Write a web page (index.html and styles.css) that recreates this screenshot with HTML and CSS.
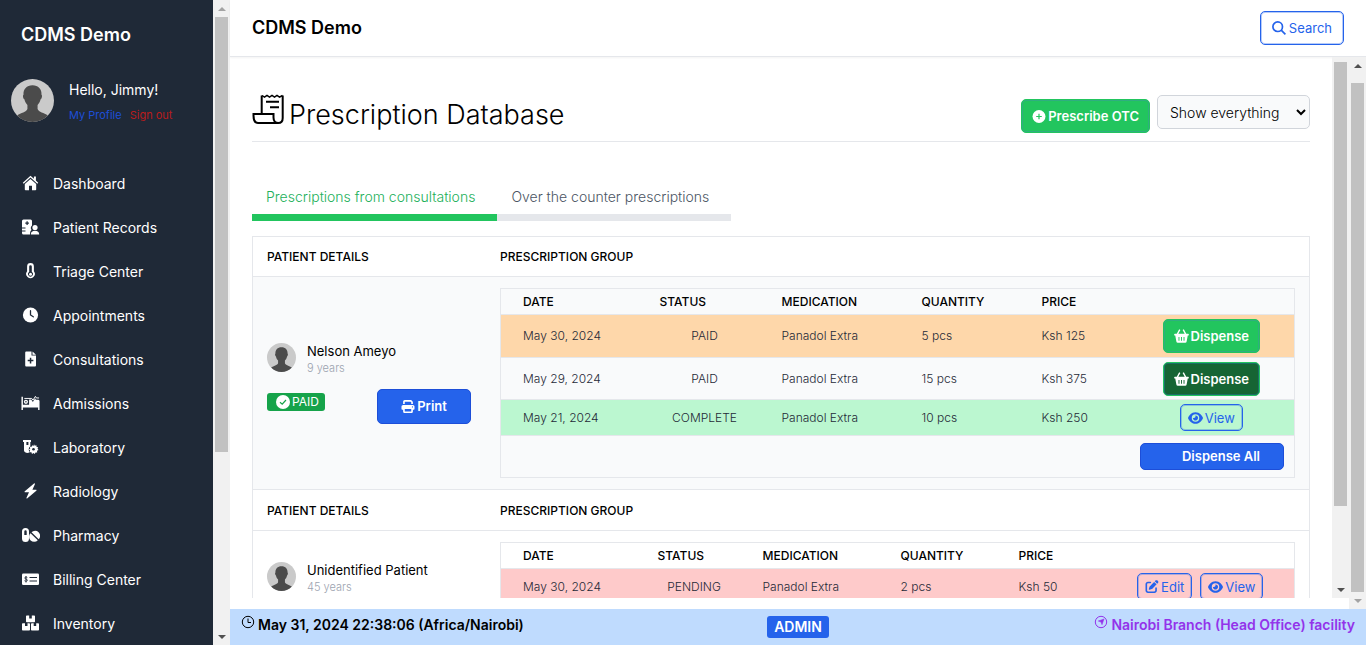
FILE: index.html
```html
<!DOCTYPE html>
<html lang="en">
<head>
<meta charset="utf-8">
<title>CDMS Demo - Prescription Database</title>
<link rel="stylesheet" href="styles.css">
</head>
<body>
<svg class="sprite" aria-hidden="true">
  <symbol id="avatar" viewBox="0 0 44 44">
    <circle cx="22" cy="22" r="22" fill="#cacaca"/>
    <path d="M22 6.500c-6 0-9.500 4-9.200 9.500-.9.400-.7 3.600.9 4.800.6 2.700 1.700 4.300 3.100 5.700v4.300c-1 3.200-6.800 3.900-10.500 6.500A22 22 0 0 0 22 44a22 22 0 0 0 15.700-6.700c-3.700-2.600-9.500-3.300-10.500-6.500v-4.300c1.400-1.400 2.500-3 3.100-5.700 1.600-1.200 1.800-4.400.9-4.800C31.500 10.500 28 6.500 22 6.500z" fill="#4b4b4b"/>
  </symbol>
  <symbol id="eye" viewBox="0 0 576 512"><path d="M288 32c-80.800 0-145.500 36.800-192.600 80.600C48.600 156 17.300 208 2.500 243.700c-3.300 7.900-3.300 16.700 0 24.600C17.300 304 48.600 356 95.400 399.400C142.500 443.200 207.200 480 288 480s145.500-36.800 192.600-80.600c46.800-43.500 78.100-95.400 93-131.100c3.300-7.900 3.300-16.700 0-24.600c-14.900-35.700-46.200-87.700-93-131.100C433.500 68.800 368.800 32 288 32zM144 256a144 144 0 1 1 288 0 144 144 0 1 1-288 0zm144-64c0 35.300-28.700 64-64 64c-7.100 0-13.900-1.200-20.300-3.300c-5.500-1.800-11.900 1.600-11.700 7.400c.3 6.900 1.300 13.800 3.200 20.700c13.700 51.200 66.400 81.600 117.600 67.900s81.600-66.400 67.900-117.600c-11.100-41.500-47.800-69.400-88.600-71.100c-5.800-.2-9.200 6.100-7.400 11.700c2.100 6.400 3.300 13.200 3.300 20.300z"/></symbol>
  <symbol id="edit" viewBox="0 0 512 512"><path d="M471.600 21.700c-21.900-21.900-57.300-21.900-79.200 0L362.300 51.700l97.900 97.900 30.100-30.100c21.900-21.900 21.900-57.300 0-79.200L471.600 21.700zm-299.200 220c-6.100 6.100-10.800 13.600-13.500 21.900l-29.600 88.800c-2.900 8.600-.6 18.100 5.800 24.600s15.900 8.700 24.600 5.800l88.800-29.600c8.200-2.700 15.700-7.400 21.900-13.500L437.700 172.300 339.700 74.300 172.400 241.700zM96 64C43 64 0 107 0 160V416c0 53 43 96 96 96H352c53 0 96-43 96-96V320c0-17.700-14.300-32-32-32s-32 14.300-32 32v96c0 17.700-14.300 32-32 32H96c-17.700 0-32-14.300-32-32V160c0-17.700 14.300-32 32-32h96c17.700 0 32-14.300 32-32s-14.300-32-32-32H96z"/></symbol>
  <symbol id="print" viewBox="0 0 512 512"><path d="M128 0C92.700 0 64 28.700 64 64v96h64V64H354.700L384 93.300V160h64V93.300c0-17-6.700-33.300-18.700-45.300L400 18.700C388 6.700 371.700 0 354.700 0H128zM384 352v96H128V352H384zm64 32h32c17.700 0 32-14.300 32-32V256c0-35.300-28.700-64-64-64H64c-35.300 0-64 28.700-64 64v96c0 17.700 14.300 32 32 32H64v64c0 35.300 28.700 64 64 64H384c35.300 0 64-28.700 64-64V384zM432 248a24 24 0 1 1 0 48 24 24 0 1 1 0-48z"/></symbol>
  <symbol id="basket" viewBox="0 0 16 15"><path fill-rule="evenodd" d="M5.500.3 6.800 1 4.600 5.200h6.800L9.200 1 10.500.3 13.100 5.200H15a.8.8 0 0 1 0 1.800h-.3l-1.200 6.300a1.600 1.600 0 0 1-1.600 1.400H4.100a1.600 1.600 0 0 1-1.600-1.400L1.300 7H1a.8.8 0 0 1 0-1.800h1.900zM4.800 8.500v4h1v-4zm2.700 0v4h1v-4zm2.700 0v4h1v-4z"/></symbol>
</svg>

<div class="app">
  <aside class="sidebar">
    <div class="brand">CDMS Demo</div>
    <div class="user">
      <svg class="user-pic" aria-hidden="true"><use href="#avatar"/></svg>
      <div>
        <div class="hello">Hello, Jimmy!</div>
        <div class="user-links"><a class="profile" href="#">My Profile</a><a class="signout" href="#">Sign out</a></div>
      </div>
    </div>
    <nav class="menu">
      <a href="#"><svg viewBox="0 0 16 16"><path d="M8 .8.3 7.700l.9 1L8 2.600l6.800 6.100.9-1-2.300-2.100V1.500h-2v2.300z"/><path d="M8 4 2.300 9v5.400c0 .5.300.8.800.8h3.400v-4.500h3v4.500h3.400c.5 0 .8-.3.800-.8V9z"/></svg>Dashboard</a>
      <a href="#"><svg viewBox="0 0 18 16"><path fill-rule="evenodd" d="M2 .5h7A1.500 1.500 0 0 1 10.500 2v4.500A3.500 3.500 0 0 0 10 11c-1 .8-1.500 2-1.500 4.500H2A1.500 1.500 0 0 1 .5 14v-1.500H4v-1H.5v-2H4v-1H.5V2A1.500 1.500 0 0 1 2 .5zm3 1.800v1.200H3.800v1.200H5v1.200h1.200V4.700h1.200V3.500H6.200V2.300z"/><circle cx="13.500" cy="8.500" r="2.600"/><path d="M9.300 15.500c0-2.600 1.600-3.700 4.200-3.700s4.200 1.100 4.200 3.700z"/></svg>Patient Records</a>
      <a href="#"><svg viewBox="0 0 16 16"><path d="M4.600 3.500a3.400 3.400 0 0 1 6.800 0v4.700a4.300 4.300 0 1 1-6.800 0z"/><path d="M6.700 3.500a1.300 1.300 0 0 1 2.600 0v5.600a2.400 2.400 0 1 1-2.600 0z" fill="#1f2937"/><circle cx="8" cy="11.200" r="1.500"/></svg>Triage Center</a>
      <a href="#"><svg viewBox="0 0 16 16"><circle cx="8" cy="8" r="7.600"/><path d="M8 3.700V8l2.800 1.800" fill="none" stroke="#1f2937" stroke-width="1.300" stroke-linecap="round"/></svg>Appointments</a>
      <a href="#"><svg viewBox="0 0 16 16"><path fill-rule="evenodd" d="M4 .5h5v4h4.500v9.700c0 .8-.5 1.300-1.300 1.300H4c-.8 0-1.300-.5-1.300-1.300V1.800C2.700 1 3.200.5 4 .5zM7.300 6.800v2H5.200v1.500h2.100v2.100h1.500v-2.100h2.100V8.800H8.800v-2z"/><path d="M10 .5 13.500 3.700H10z"/></svg>Consultations</a>
      <a href="#"><svg viewBox="0 0 20 16"><path d="M.5 1.500H2v8.300h6.500V4.200h2.200L12.500 7l2.300-4 .9 1.700h2.300A1.500 1.500 0 0 1 19.500 6v9.300H18v-2.500H2v2.500H.5z"/><circle cx="5.200" cy="6.800" r="2.200"/><circle cx="5.200" cy="6.800" r=".8" fill="#1f2937"/><path d="M3.500 3.200h7.800l1.300 1.800 2.600-4 1 1.700H19" fill="none" stroke="#fff"/></svg>Admissions</a>
      <a href="#"><svg viewBox="0 0 16 16"><path fill-rule="evenodd" d="M.5 1h8v2H7.800v4.200A4.400 4.400 0 0 0 7.200 13c-1 1.600-5.700 1-5.700-1.500V3H.5zM3.900 3v3h2V3z"/><path d="m11.500 5.300.8 1.500 1.600-.6.200 1.700 1.600.3-.7 1.500 1 1.300-1.500.8.200 1.700-1.700.1-.7 1.500-1.300-1-1.500.8-.6-1.600-1.700-.1.400-1.600-1.200-1.200 1.300-1-.3-1.700 1.700 0 .7-1.500 1.200.9z"/><circle cx="11" cy="10.300" r="1.300" fill="#1f2937"/></svg>Laboratory</a>
      <a href="#"><svg viewBox="0 0 16 16"><path d="M11.500.5 2.300 8.300c-.5.500-.2 1 .4 1h3.800L4 14.700c-.3.700.4 1 .9.600L13.800 7.700c.5-.5.200-1-.4-1H9.900L12.400 1.200c.2-.7-.4-1.100-.9-.7z"/></svg>Radiology</a>
      <a href="#"><svg viewBox="0 0 18 16"><path fill-rule="evenodd" d="M.5 4.500a3.500 3.500 0 0 1 7 0v7a3.500 3.500 0 0 1-7 0zm2.300 0V8h2.400V4.500a1.200 1.200 0 0 0-2.400 0z"/><path d="M9 6.300 16.300 13.300A4.700 4.700 0 0 1 9 6.300zM10 5.300A4.700 4.700 0 0 1 17.200 12.300z"/></svg>Pharmacy</a>
      <a href="#"><svg viewBox="0 0 18 16"><rect x=".5" y="2.500" width="17" height="11.500" rx="1.300"/><path d="M8 6.500h7.500M8 10h7.500" stroke="#1f2937"/><path d="M5.800 6.500c-.8-.7-2.600-.5-2.600.5 0 1.300 2.700.8 2.700 2.200 0 1.200-2 1.300-2.900.5M4.500 5v6.500" fill="none" stroke="#1f2937" stroke-width=".9"/></svg>Billing Center</a>
      <a href="#"><svg viewBox="0 0 18 16"><path d="M5.300.5h2.400v3h2.600v-3h2.400c.5 0 .8.300.8.800v5.200c0 .5-.3.800-.8.800H5.300c-.5 0-.8-.3-.8-.8V1.300c0-.5.300-.8.800-.8zM1.300 8.300h2.200v2.600H6V8.300h1.700c.5 0 .8.300.8.800v5.600c0 .5-.3.800-.8.800H1.300c-.5 0-.8-.3-.8-.8V9.100c0-.5.300-.8.800-.8zM10.300 8.300h1.900v2.600h2.500V8.300h2c.5 0 .8.300.8.800v5.600c0 .5-.3.800-.8.800h-6.400c-.5 0-.8-.3-.8-.8V9.100c0-.5.300-.8.800-.8z"/></svg>Inventory</a>
    </nav>
  </aside>
  <div class="scrollbar side-bar" aria-hidden="true"><i class="arrow up faint"></i><i class="thumb"></i><i class="rest"></i><i class="arrow down"></i></div>

  <div class="page">
    <header class="topbar">
      <span class="topbar-title">CDMS Demo</span>
      <button class="btn outline search" type="button"><svg viewBox="0 0 14 14" fill="none" stroke="currentColor" stroke-width="1.700"><circle cx="5.700" cy="5.700" r="4.800"/><path d="m9.200 9.200 4.200 4.200"/></svg>Search</button>
    </header>

    <div class="viewport">
      <div class="inner">
        <main class="content">
          <div class="heading">
            <h1><svg viewBox="0 0 32 30" fill="none" stroke="currentColor" stroke-width="2"><path d="M9.200 19V1.500M30.200 1.500V24c0 3-1.500 5-4.500 5H5.500C2.500 29 1 26 1 21.500V20h20v3.500c0 3 1.500 5.500 5 5.500"/><path d="M9.500 1.500 12 3.200l2.500-1.700L17 3.200l2.500-1.700L22 3.200l2.500-1.700L27 3.200l3-1.700" stroke-width="1.500"/><path d="M13.500 7.800h13M17.500 13.200h9"/></svg>Prescription Database</h1>
            <div class="tools">
              <button class="btn green otc" type="button"><svg viewBox="0 0 14 14"><circle cx="7" cy="7" r="7" fill="currentColor"/><path d="M7 4v6M4 7h6" stroke="#22c55e" stroke-width="1.300"/></svg>Prescribe OTC</button>
              <select class="filter" aria-label="Filter prescriptions"><option>Show everything</option></select>
            </div>
          </div>

          <div class="tabs">
            <a class="tab active" href="#">Prescriptions from consultations</a>
            <a class="tab" href="#">Over the counter prescriptions</a>
          </div>

          <table class="groups">
            <colgroup><col class="g-patient"><col></colgroup>
            <tbody>
              <tr class="group-head"><th>PATIENT DETAILS</th><th>PRESCRIPTION GROUP</th></tr>
              <tr class="group shaded">
                <td>
                  <div class="patient"><svg aria-hidden="true"><use href="#avatar"/></svg><div><div class="name">Nelson Ameyo</div><div class="age">9 years</div></div></div>
                  <div class="patient-actions">
                    <span class="paid"><svg viewBox="0 0 14 14"><circle cx="7" cy="7" r="7" fill="currentColor"/><path d="m4 7.200 2.200 2L10 5" fill="none" stroke="#16a34a" stroke-width="1.200"/></svg>PAID</span>
                    <button class="btn blue print" type="button"><svg><use href="#print"/></svg>Print</button>
                  </div>
                </td>
                <td>
                  <table class="items">
                    <colgroup><col class="a1"><col class="a2"><col class="a3"><col class="a4"><col class="a5"><col></colgroup>
                    <thead><tr><th>DATE</th><th>STATUS</th><th>MEDICATION</th><th>QUANTITY</th><th>PRICE</th><th></th></tr></thead>
                    <tbody>
                      <tr class="tall orange"><td>May 30, 2024</td><td class="status">PAID</td><td>Panadol Extra</td><td>5 pcs</td><td>Ksh 125</td><td class="actions"><button class="btn green" type="button"><svg class="bk"><use href="#basket"/></svg>Dispense</button></td></tr>
                      <tr class="tall"><td>May 29, 2024</td><td class="status">PAID</td><td>Panadol Extra</td><td>15 pcs</td><td>Ksh 375</td><td class="actions"><button class="btn green dark" type="button"><svg class="bk"><use href="#basket"/></svg>Dispense</button></td></tr>
                      <tr class="mint"><td>May 21, 2024</td><td class="status">COMPLETE</td><td>Panadol Extra</td><td>10 pcs</td><td>Ksh 250</td><td class="actions"><button class="btn outline small" type="button"><svg class="bk"><use href="#eye"/></svg>View</button></td></tr>
                      <tr class="total"><td colspan="6"><button class="btn blue all" type="button">Dispense All</button></td></tr>
                    </tbody>
                  </table>
                </td>
              </tr>
              <tr class="group-head"><th>PATIENT DETAILS</th><th>PRESCRIPTION GROUP</th></tr>
              <tr class="group">
                <td>
                  <div class="patient"><svg aria-hidden="true"><use href="#avatar"/></svg><div><div class="name">Unidentified Patient</div><div class="age">45 years</div></div></div>
                </td>
                <td>
                  <table class="items">
                    <colgroup><col class="b1"><col class="b2"><col class="b3"><col class="b4"><col class="b5"><col></colgroup>
                    <thead><tr><th>DATE</th><th>STATUS</th><th>MEDICATION</th><th>QUANTITY</th><th>PRICE</th><th></th></tr></thead>
                    <tbody>
                      <tr class="pink"><td>May 30, 2024</td><td class="status">PENDING</td><td>Panadol Extra</td><td>2 pcs</td><td>Ksh 50</td><td class="actions"><button class="btn outline small" type="button"><svg><use href="#edit"/></svg>Edit</button><button class="btn outline small" type="button"><svg class="bk"><use href="#eye"/></svg>View</button></td></tr>
                    </tbody>
                  </table>
                </td>
              </tr>
            </tbody>
          </table>
        </main>
        <div class="scrollbar inner-bar" aria-hidden="true"><i class="thumb"></i><i class="rest"></i><i class="arrow down"></i></div>
      </div>
      <div class="scrollbar outer-bar" aria-hidden="true"><i class="arrow up"></i><i class="thumb"></i><i class="arrow down faint"></i></div>
    </div>

    <footer class="statusbar">
      <span class="clock"><svg viewBox="0 0 14 14" fill="none" stroke="currentColor"><circle cx="7" cy="7" r="5.700"/><path d="M7 3.500V7.500H10"/></svg>May 31, 2024 22:38:06 (Africa/Nairobi)</span>
      <span class="role">ADMIN</span>
      <span class="facility"><svg viewBox="0 0 14 14" fill="none" stroke="currentColor"><circle cx="7" cy="7" r="5.700"/><path d="m10 4-2 5.700-1-2.700-2.700-1z" fill="currentColor" stroke-width=".5"/></svg>Nairobi Branch (Head Office) facility</span>
    </footer>
  </div>
</div>
</body>
</html>
```

FILE: styles.css
```css
* { box-sizing: border-box; }
body {
  margin: 0;
  font-family: Inter, "Open Sans", "Liberation Sans", sans-serif;
  font-size: 14px;
  color: #000;
  background: #fff;
}
a { text-decoration: none; }
button, select { font-family: inherit; }
.sprite { position: absolute; width: 0; height: 0; }

.app {
  display: grid;
  grid-template-columns: 213px 17px minmax(0, 1fr);
  height: 100vh;
  overflow: hidden;
}

/* Sidebar */
.sidebar { background: #1f2937; color: #fff; overflow: hidden; min-height: 0; }
.brand { padding: 22px 21px 0; font-size: 18px; line-height: 25px; font-weight: 600; }
.user { display: flex; gap: 15px; padding: 32px 11px 0; }
.user-pic { width: 43px; height: 43px; }
.hello { font-size: 14px; line-height: 22px; }
.user-links { display: flex; gap: 8px; font-size: 11px; line-height: 28px; }
.profile { color: #1d4ed8; }
.signout { color: #b91c1c; }
.menu { padding-top: 32px; }
.menu a {
  display: flex;
  align-items: center;
  gap: 13px;
  height: 44px;
  padding-left: 21px;
  color: #fff;
  font-size: 14px;
}
.menu svg { width: 19px; height: 16px; fill: #fff; }

/* Scroll tracks */
.scrollbar { display: flex; flex-direction: column; background: #f1f1f1; padding: 0 2px; width: 17px; }
.arrow { height: 17px; display: flex; align-items: center; justify-content: center; flex: none; }
.arrow::before { content: ""; border: 4px solid transparent; }
.arrow.up::before { border-top: 0; border-bottom-color: #505050; }
.arrow.down::before { border-bottom: 0; border-top-color: #505050; }
.arrow.faint.up::before { border-bottom-color: #a3a3a3; }
.arrow.faint.down::before { border-top-color: #a3a3a3; }
.thumb { background: #c1c1c1; flex: 1; }
.side-bar .thumb { flex: 435; }
.side-bar .rest { flex: 176; }
.inner-bar { padding-top: 5px; }
.inner-bar .thumb { flex: 444; }
.inner-bar .rest { flex: 75; }
.outer-bar .thumb { margin-top: 9px; }

/* Page frame */
.page { display: flex; flex-direction: column; min-width: 0; min-height: 0; }
.topbar {
  display: flex;
  align-items: center;
  justify-content: space-between;
  flex: none;
  height: 57px;
  padding: 0 22px;
  border-bottom: 1px solid #e5e7eb;
  box-shadow: 0 1px 2px #0000000d;
}
.topbar-title { font-size: 18px; font-weight: 600; padding-bottom: 2px; }
.viewport { flex: 1; min-height: 0; display: flex; }
.inner { flex: 1; min-width: 0; display: flex; margin-bottom: 11px; }
.content { flex: 1; min-width: 0; overflow: hidden; padding: 0 22px; }

/* Buttons */
.btn {
  display: inline-flex;
  align-items: center;
  justify-content: center;
  gap: 2px;
  height: 34px;
  padding: 0 10px;
  border: 1px solid;
  border-radius: 5px;
  font-size: 13px;
  font-weight: 600;
  line-height: 18px;
  white-space: nowrap;
}
.btn svg { width: 14px; height: 13px; fill: currentColor; }
.btn svg.bk { width: 15px; height: 14px; }
.outline { border-color: #2563eb; background: transparent; color: #2563eb; font-weight: 400; box-shadow: inset 0 0 0 1px #2563eb55; }
.green { background: #22c55e; border-color: #22c55e; color: #fff; box-shadow: inset 0 0 0 1px #2fae80; }
.dark { background: #166534; box-shadow: inset 0 0 0 1px #1b6f6a; }
.blue { background: #2563eb; border-color: #1d4ed8; color: #fff; }
.small { height: 27px; padding: 0 7px; }
.search { gap: 3px; padding: 0 11px; }
.btn.search svg { fill: none; height: 14px; }

/* Heading */
.heading {
  display: flex;
  align-items: flex-start;
  justify-content: space-between;
  height: 85px;
  border-bottom: 1px solid #e5e7eb;
}
h1 { display: flex; gap: 4px; margin: 0; padding-top: 37px; font-size: 27px; line-height: 42px; font-weight: 300; }
h1 svg { width: 33px; height: 30px; }
.tools { display: flex; gap: 7px; padding-top: 38px; align-items: flex-start; }
.otc { margin-top: 4px; }
.filter {
  width: 153px;
  height: 34px;
  padding: 0 8px;
  border: 1px solid #d1d5db;
  border-radius: 5px;
  background: #f9fafb;
  color: #000;
  font-size: 14px;
  font-weight: 300;
}

/* Tabs */
.tabs { display: flex; padding-top: 40px; }
.tab {
  padding: 0 22px 2px 14px;
  font-size: 14px;
  line-height: 30px;
  font-weight: 300;
  color: #4b5563;
  border-bottom: 7px solid #e5e7eb;
  white-space: nowrap;
}
.tab.active { color: #22b05a; border-color: #22c55e; }

/* Prescription groups */
table { border-collapse: collapse; table-layout: fixed; width: 100%; }
th { text-align: left; font-size: 12px; font-weight: 500; }
.groups { margin-top: 15px; border: 1px solid #e5e7eb; }
.g-patient { width: 22%; }
.group-head { height: 40px; border-bottom: 1px solid #e5e7eb; }
.group ~ .group-head { height: 41px; }
.group-head th { padding: 0 14px; }
.group-head th + th { padding-left: 15px; }
.group { height: 97px; border-bottom: 1px solid #e5e7eb; }
.group > td { padding: 11px 14px; }
.group > td + td { padding-left: 15px; vertical-align: top; }
.shaded { background: #f9fafb; }
.patient { display: flex; gap: 11px; }
.patient svg { width: 29px; height: 29px; }
.name { font-size: 13px; line-height: 17px; }
.age { font-size: 11px; line-height: 17px; font-weight: 300; color: #9ca3af; }
.patient-actions { display: flex; justify-content: space-between; align-items: flex-start; padding-top: 12px; }
.paid {
  display: flex;
  align-items: center;
  gap: 2px;
  height: 18px;
  margin-top: 4px;
  padding: 0 6px 0 9px;
  border-radius: 3px;
  background: #16a34a;
  color: #fff;
  font-size: 12px;
}
.paid svg { width: 14px; height: 14px; }
.print { width: 94px; height: 35px; }

.items { border: 1px solid #e5e7eb; font-size: 12px; }
.items tr { border-bottom: 1px solid #e5e7eb; height: 36px; }
.items thead tr { height: 26px; }
.items tbody .tall { height: 42px; }
.items tbody .orange { height: 43px; }
.items tbody .total { height: 42px; }
.items th, .items td { padding: 0 10px 0 22px; white-space: nowrap; }
.items td { padding-bottom: 1px; font-weight: 300; color: #1f2937; }
.items .status { text-align: center; }
.items .actions { padding: 0; text-align: center; }
.actions .btn { vertical-align: middle; }
.actions .btn + .btn { margin-left: 8px; }
.items .total td { text-align: right; }
.all { width: 144px; height: 27px; padding-left: 28px; vertical-align: middle; }
.orange { background: #fed7aa; }
.mint { background: #bbf7d0; }
.pink { background: #fecaca; }
.a1 { width: 137px; }
.a2 { width: 122px; }
.a3 { width: 140px; }
.a4 { width: 120px; }
.a5 { width: 109px; }
.b1 { width: 135px; }
.b2 { width: 105px; }
.b3 { width: 138px; }
.b4 { width: 118px; }
.b5 { width: 110px; }

/* Status bar */
.statusbar {
  display: grid;
  grid-template-columns: 1fr auto 1fr;
  align-items: center;
  flex: none;
  height: 36px;
  padding: 0 11px;
  background: #bfdbfe;
  font-size: 14px;
  font-weight: 600;
}
.statusbar svg { width: 14px; height: 14px; margin-bottom: 5px; }
.clock, .facility { display: flex; align-items: center; gap: 3px; padding-bottom: 6px; }
.facility { justify-content: flex-end; color: #9333ea; }
.role { padding: 0 7px; border-radius: 3px; background: #2563eb; color: #fff; line-height: 22px; }
```
